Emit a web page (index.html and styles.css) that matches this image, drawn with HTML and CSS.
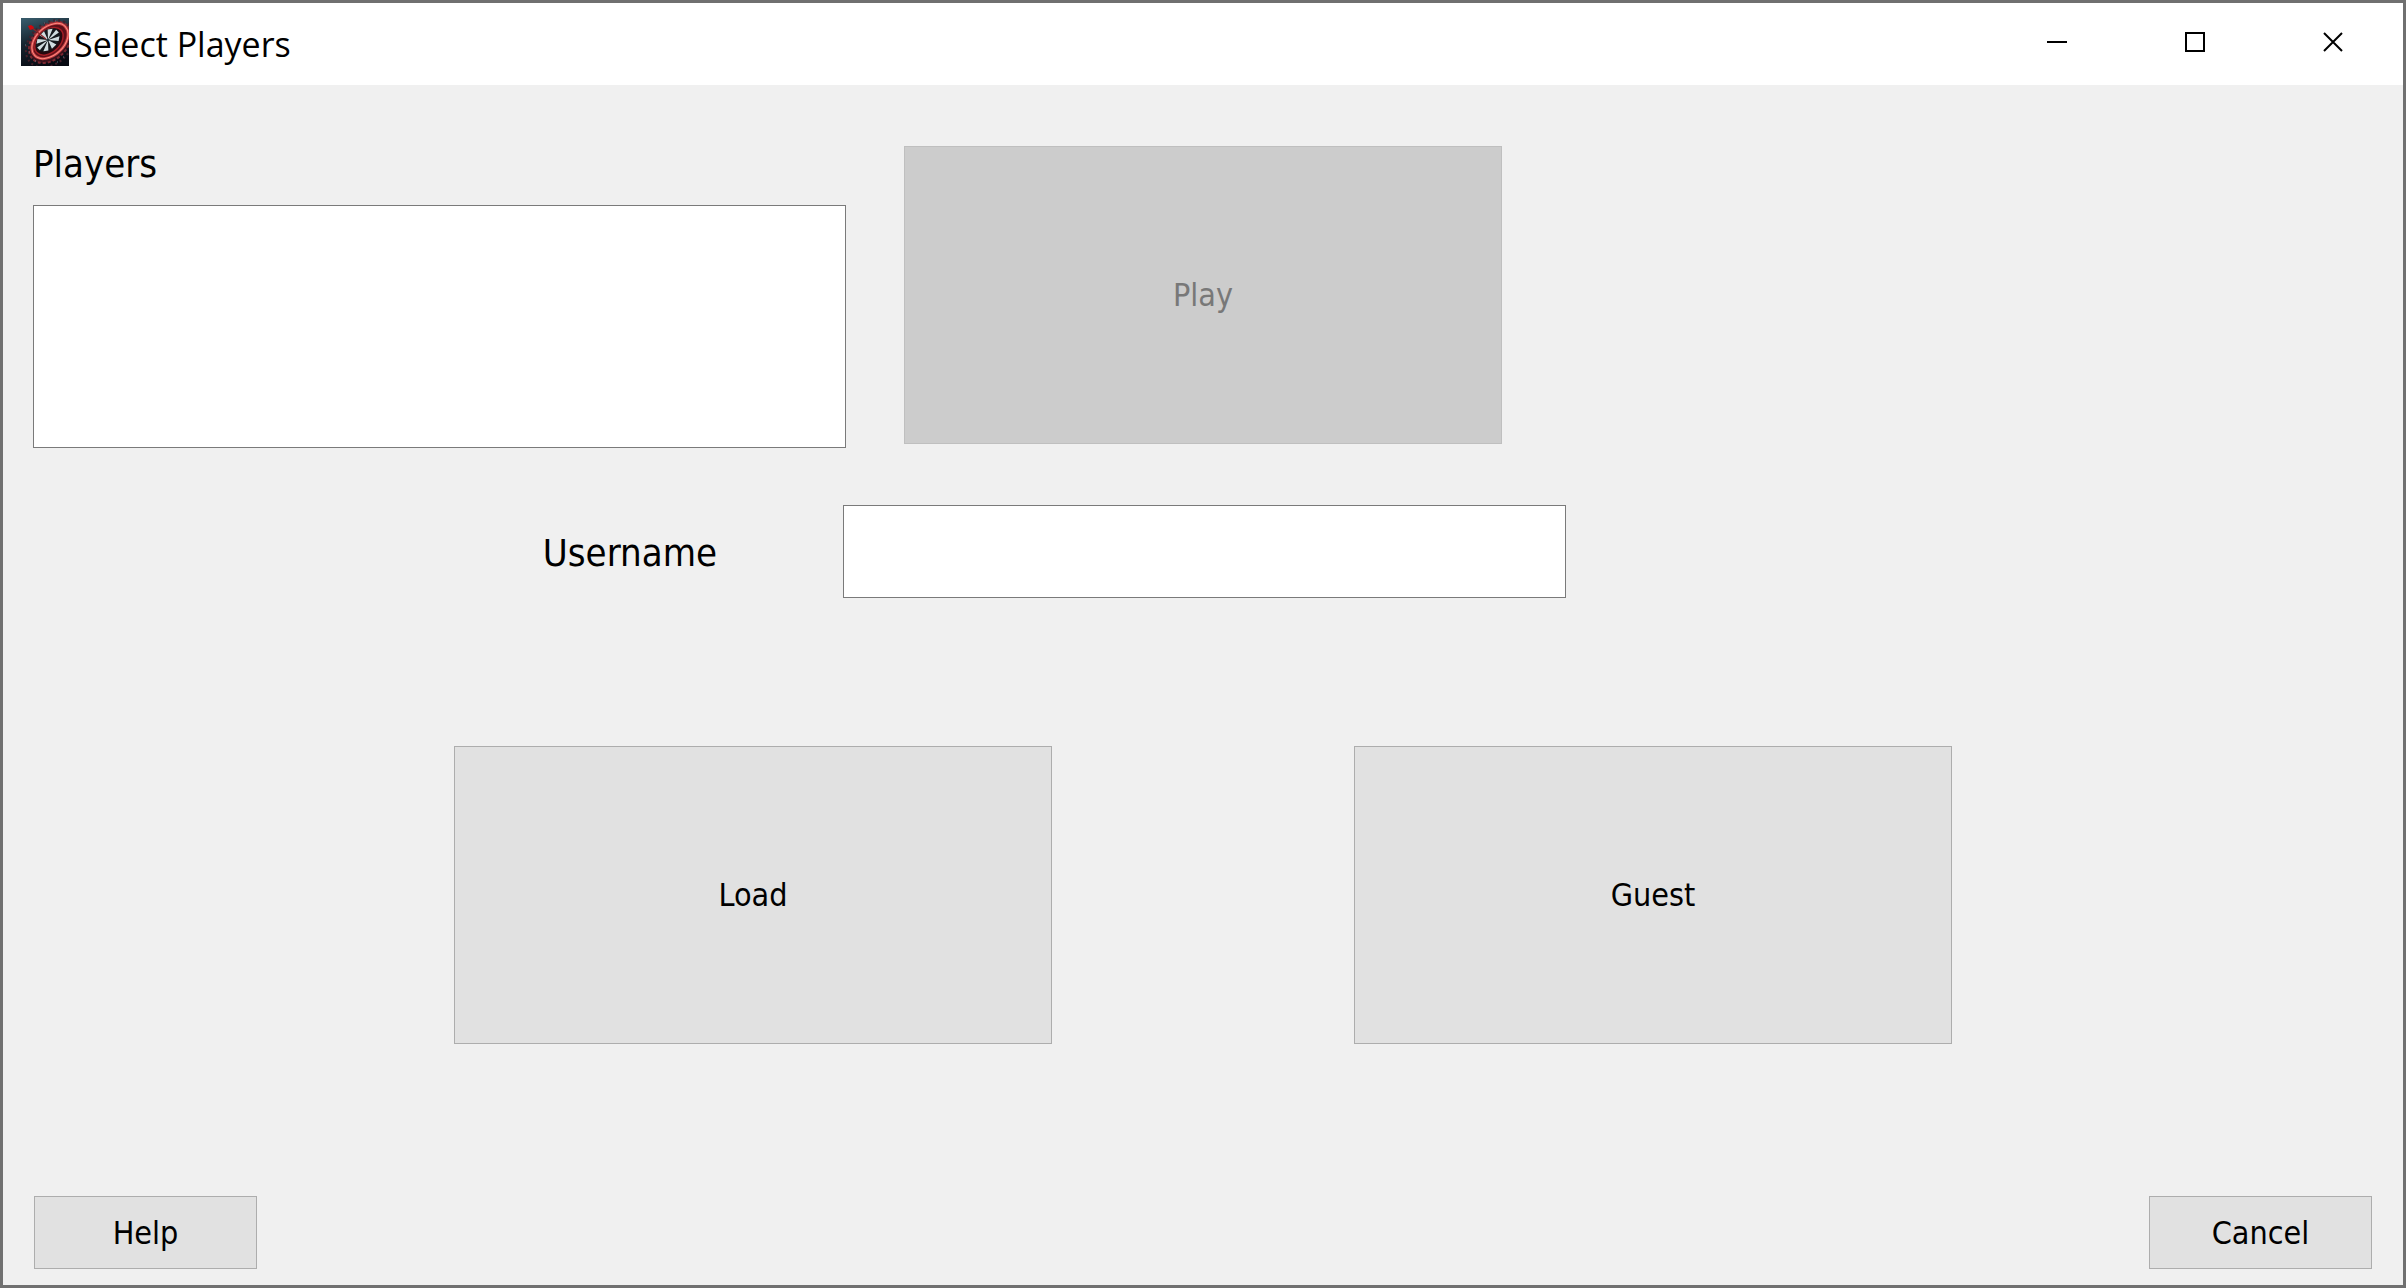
FILE: index.html
```html
<!DOCTYPE html>
<html lang="en">
<head>
<meta charset="utf-8">
<title>Select Players</title>
<link rel="stylesheet" href="styles.css">
</head>
<body>
<div class="window">
  <header class="titlebar">
    <svg class="app-icon" viewBox="0 0 48 48" aria-hidden="true">
      <defs>
        <linearGradient id="night" x1="0.2" y1="0" x2="0.5" y2="1">
          <stop offset="0" stop-color="#365868"/>
          <stop offset="0.45" stop-color="#172631"/>
          <stop offset="1" stop-color="#080a12"/>
        </linearGradient>
        <clipPath id="frame"><rect width="48" height="48"/></clipPath>
      </defs>
      <g clip-path="url(#frame)">
        <rect width="48" height="48" fill="url(#night)"/>
        <g transform="rotate(-43 29 23)" fill="none">
          <ellipse cx="27" cy="25" rx="27" ry="20" stroke="#45202b" stroke-width="2" stroke-dasharray="2 3"/>
          <ellipse cx="28" cy="24" rx="24" ry="17" fill="#3b121c" stroke="#7a2831" stroke-width="2" stroke-dasharray="3 2"/>
          <ellipse cx="29" cy="23" rx="21" ry="14" fill="#5d1019" stroke="#c03c40" stroke-width="3"/>
          <ellipse cx="29" cy="23" rx="21" ry="14" stroke="#ff8a80" stroke-width="1"/>
          <ellipse cx="28" cy="22.5" rx="16.500" ry="11" fill="#25090f" stroke="#a31d25" stroke-width="1.500"/>
        </g>
        <g transform="rotate(-43 27 22)">
          <ellipse cx="27" cy="22" rx="14" ry="9.500" fill="#15191d"/>
          <g fill="#d0dcdf">
            <path d="M27 22 40 20V24ZM27 22 38 27 34 30ZM27 22 30 31H24ZM27 22 20 30 16 27ZM27 22 14 24V20ZM27 22 16 17 20 14ZM27 22 24 13H30ZM27 22 34 14 38 17Z"/>
          </g>
          <circle cx="27" cy="22" r="1.500" fill="#26343a"/>
        </g>
        <path d="M10 9 25 21" stroke="#8d2528" stroke-width="1.200"/>
        <path d="M7 8 10 7 13 9 12 11 9 12Z" fill="#cf080d"/>
        <path d="M23 5h1M34 3h1M8 34h1M14 43h1M42 39h1M36 44h1M4 27h1" stroke="#607887"/>
      </g>
    </svg>
    <h1 class="title">Select Players</h1>
    <div class="window-controls">
      <button class="control" type="button" aria-label="Minimize">
        <svg class="glyph" viewBox="0 0 20 20"><path d="M0 10H20"/></svg>
      </button>
      <button class="control" type="button" aria-label="Maximize">
        <svg class="glyph" viewBox="0 0 20 20"><path d="M1 1H19V19H1Z"/></svg>
      </button>
      <button class="control" type="button" aria-label="Close">
        <svg class="glyph" viewBox="0 0 20 20"><path d="M1 1 19 19M19 1 1 19"/></svg>
      </button>
    </div>
  </header>
  <main class="content">
    <section class="players-row">
      <div class="players">
        <label class="label" for="players">Players</label>
        <select class="player-list" id="players" multiple></select>
      </div>
      <button class="button large" type="button" disabled>Play</button>
    </section>
    <div class="username-row">
      <label class="label" for="username">Username</label>
      <input class="username" id="username" type="text">
    </div>
    <div class="actions">
      <button class="button large" type="button">Load</button>
      <button class="button large" type="button">Guest</button>
    </div>
    <footer class="footer">
      <button class="button small" type="button">Help</button>
      <button class="button small" type="button">Cancel</button>
    </footer>
  </main>
</div>
</body>
</html>
```
FILE: styles.css
```css
* {
  box-sizing: border-box;
}

body {
  margin: 0;
  background: #f0f0f0;
  color: #000;
  font-family: Tahoma, "DejaVu Sans Condensed", "Noto Sans", sans-serif;
}

.window {
  display: flex;
  flex-direction: column;
  min-height: 100vh;
  border: 3px solid #707070;
}

.titlebar {
  display: flex;
  align-items: center;
  height: 82px;
  padding-left: 18px;
  background: #fff;
}

.app-icon {
  width: 48px;
  height: 48px;
  margin-bottom: 4px;
}

.title {
  margin: 0 auto 0 5px;
  font: 400 34px/48px "Segoe UI", "Open Sans", sans-serif;
}

.window-controls {
  display: flex;
  align-self: flex-start;
  padding-right: 1px;
}

.control {
  display: grid;
  place-items: center;
  width: 138px;
  height: 78px;
  padding: 0;
  border: 0;
  background: transparent;
}

.glyph {
  width: 20px;
  height: 20px;
  fill: none;
  stroke: #000;
  stroke-width: 2;
}

.content {
  display: flex;
  flex: 1;
  flex-direction: column;
  padding: 61px 30px 16px;
}

.players-row {
  display: grid;
  grid-template-columns: minmax(0, 1fr) 598px minmax(0, 1fr);
  column-gap: 58px;
}

.players {
  display: flex;
  flex-direction: column;
}

.label {
  font-size: 38px;
  line-height: 36px;
}

.players .label {
  margin-bottom: 23px;
}

.player-list,
.username {
  border: 1px solid #7a7a7a;
  border-radius: 0;
  outline: 0;
  background: #fff;
  font: inherit;
}

.player-list {
  height: 243px;
}

.username-row {
  display: grid;
  grid-template-columns: minmax(0, 1fr) 723px minmax(0, 1fr);
  align-items: center;
  margin-top: 57px;
  padding-left: 3px;
}

.username-row .label {
  justify-self: end;
  padding-top: 2px;
  margin-right: 126px;
}

.username {
  height: 93px;
  padding: 0 12px;
  font-size: 38px;
}

.actions {
  display: flex;
  justify-content: center;
  gap: 302px;
  margin: 148px 0;
}

.button {
  padding: 0;
  border: 1px solid #adadad;
  background: #e1e1e1;
  color: #000;
  font: inherit;
  font-size: 32px;
  line-height: 40px;
}

.button:disabled {
  border-color: #bfbfbf;
  background: #ccc;
  color: #787878;
}

.large {
  width: 598px;
  height: 298px;
}

.small {
  width: 223px;
  height: 73px;
}

.footer {
  display: flex;
  justify-content: space-between;
  margin-top: auto;
  padding: 0 1px;
}
```
